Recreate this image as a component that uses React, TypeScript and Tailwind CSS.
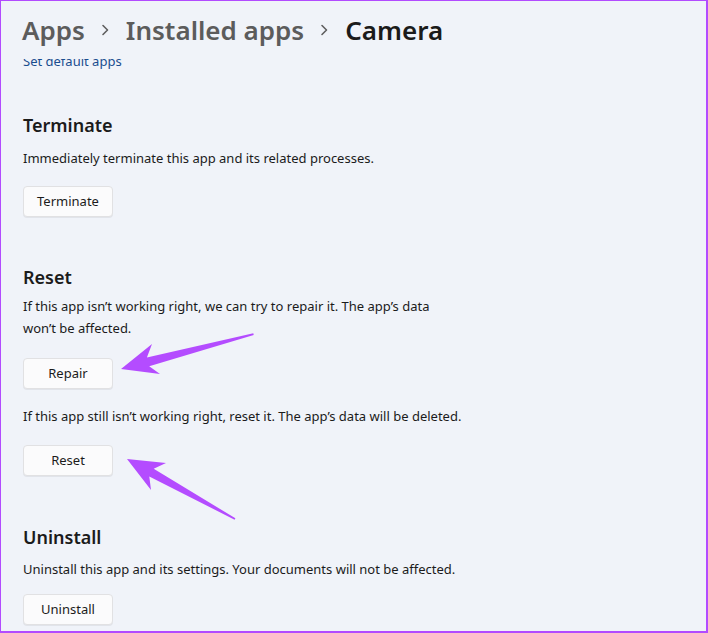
import React from "react";

function Chevron() {
  return (
    <svg width="9" height="14" viewBox="0 0 9 14" className="shrink-0">
      <path d="M2 2.5 L6.5 7 L2 11.5" fill="none" stroke="#5f5f5f" strokeWidth="1.6" strokeLinecap="round" strokeLinejoin="round" />
    </svg>
  );
}

function Btn({ label }: { label: string }) {
  return (
    <button className="w-[90px] h-[31px] rounded-[4px] border border-[#e1e1e3] bg-[#fbfbfc] text-[13px] text-[#1b1b1b] shadow-[0_1px_0_rgba(0,0,0,0.06)]">
      {label}
    </button>
  );
}

export default function App() {
  return (
    <div
      className="relative w-[708px] h-[633px] overflow-hidden bg-[#f0f3f9] border-t border-l border-r-2 border-b-2 border-[#b24bff]"
      style={{ fontFamily: '"Noto Sans", "Open Sans", sans-serif' }}
    >
      <div className="h-[58px] pt-[9px] pl-[21px] flex items-start">
        <div className="flex items-center h-[40px] text-[26px] font-semibold leading-[40px]">
          <span className="text-[#5c5c5c]">Apps</span>
          <span className="mx-[16px] flex items-center"><Chevron /></span>
          <span className="text-[#5c5c5c]">Installed apps</span>
          <span className="mx-[16px] flex items-center"><Chevron /></span>
          <span className="text-[#1b1b1b]">Camera</span>
        </div>
      </div>
      <div className="h-[11px] overflow-hidden pl-[22px]">
        <div className="-mt-[8px] text-[13px] leading-[20px] text-[#1a4d8f]">Set default apps</div>
      </div>

      <div className="pl-[22px] text-[#1b1b1b]">
        <div className="mt-[41px] text-[18px] leading-[28px] font-semibold">Terminate</div>
        <div className="mt-[9px] text-[13px] leading-[20px]">Immediately terminate this app and its related processes.</div>
        <div className="mt-[18px]"><Btn label="Terminate" /></div>

        <div className="mt-[46px] text-[18px] leading-[28px] font-semibold">Reset</div>
        <div className="mt-[4px] text-[13px] leading-[22px]">
          If this app isn’t working right, we can try to repair it. The app’s data
          <br />
          won’t be affected.
        </div>
        <div className="mt-[19px]"><Btn label="Repair" /></div>
        <div className="mt-[17px] text-[13px] leading-[20px]">If this app still isn’t working right, reset it. The app’s data will be deleted.</div>
        <div className="mt-[19px]"><Btn label="Reset" /></div>

        <div className="mt-[47px] text-[18px] leading-[28px] font-semibold">Uninstall</div>
        <div className="mt-[8px] text-[13px] leading-[20px]">Uninstall this app and its settings. Your documents will not be affected.</div>
        <div className="mt-[15px]"><Btn label="Uninstall" /></div>
      </div>

      <svg className="absolute left-0 top-0 pointer-events-none" width="708" height="633" viewBox="0 0 708 633">
        <polygon
          fill="#b44cff"
          points="120,368 151,343 145.9,356.5 252.3,332.3 252.7,333.9 148.2,365.2 159,373"
        />
        <polygon
          fill="#b44cff"
          points="126,458 165,462 152.7,467.7 234.4,517.3 233.6,518.7 148.3,475.5 150,489"
        />
      </svg>
    </div>
  );
}
